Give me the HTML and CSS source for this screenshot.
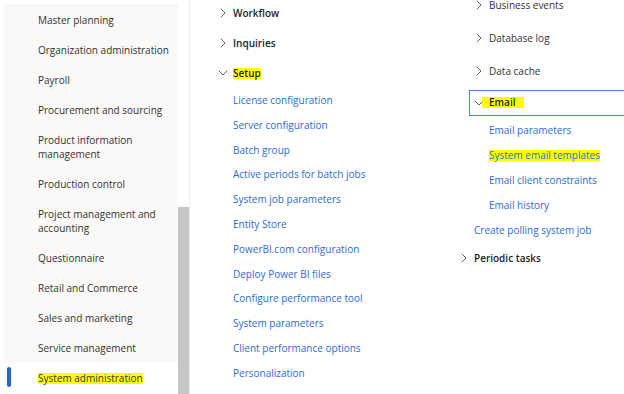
FILE: index.html
```html
<!DOCTYPE html>
<html>
    <head>
        <link rel="stylesheet" href="styles.css">
    </head>
    <body>
        <div class="page">
            <nav class="modules">
                <ul class="module-list">
                    <li class="module">Master planning</li>
                    <li class="module">Organization administration</li>
                    <li class="module">Payroll</li>
                    <li class="module">Procurement and sourcing</li>
                    <li class="module">Product information management</li>
                    <li class="module">Production control</li>
                    <li class="module">Project management and accounting</li>
                    <li class="module">Questionnaire</li>
                    <li class="module">Retail and Commerce</li>
                    <li class="module">Sales and marketing</li>
                    <li class="module">Service management</li>
                    <li class="module selected"><span class="hl">System administration</span></li>
                </ul>
            </nav>
            <div class="scrollbar"><div class="thumb"></div></div>

            <section class="col col-mid">
                <div class="group"><span class="chev"><svg width="6" height="10" viewBox="0 0 6 10"><path d="M0.8 0.8 L5 5 L0.8 9.2"/></svg></span>Workflow</div>
                <div class="group"><span class="chev"><svg width="6" height="10" viewBox="0 0 6 10"><path d="M0.8 0.8 L5 5 L0.8 9.2"/></svg></span>Inquiries</div>
                <div class="group"><span class="chev"><svg width="10" height="6" viewBox="0 0 10 6"><path d="M0.8 0.8 L5 5 L9.2 0.8"/></svg></span><span class="hl">Setup</span></div>
                <a class="link">License configuration</a>
                <a class="link">Server configuration</a>
                <a class="link">Batch group</a>
                <a class="link">Active periods for batch jobs</a>
                <a class="link">System job parameters</a>
                <a class="link">Entity Store</a>
                <a class="link">PowerBI.com configuration</a>
                <a class="link">Deploy Power BI files</a>
                <a class="link">Configure performance tool</a>
                <a class="link">System parameters</a>
                <a class="link">Client performance options</a>
                <a class="link">Personalization</a>
            </section>

            <section class="col col-right">
                <div class="sub">
                    <div class="group tall plain"><span class="chev"><svg width="6" height="10" viewBox="0 0 6 10"><path d="M0.8 0.8 L5 5 L0.8 9.2"/></svg></span>Business events</div>
                    <div class="group tall plain"><span class="chev"><svg width="6" height="10" viewBox="0 0 6 10"><path d="M0.8 0.8 L5 5 L0.8 9.2"/></svg></span>Database log</div>
                    <div class="group tall plain"><span class="chev"><svg width="6" height="10" viewBox="0 0 6 10"><path d="M0.8 0.8 L5 5 L0.8 9.2"/></svg></span>Data cache</div>
                    <div class="focus-row">
                        <div class="group focused"><span class="chev"><svg width="10" height="6" viewBox="0 0 10 6"><path d="M0.8 0.8 L5 5 L9.2 0.8"/></svg></span><span class="hl hl-wide">Email</span></div>
                    </div>
                    <div class="sublinks">
                        <a class="link">Email parameters</a>
                        <a class="link"><span class="hl">System email templates</span></a>
                        <a class="link">Email client constraints</a>
                        <a class="link">Email history</a>
                    </div>
                </div>
                <a class="link link-l1">Create polling system job</a>
                <div class="group periodic"><span class="chev"><svg width="6" height="10" viewBox="0 0 6 10"><path d="M0.8 0.8 L5 5 L0.8 9.2"/></svg></span>Periodic tasks</div>
            </section>
        </div>
    </body>
</html>
```

FILE: styles.css
```css
body{
    margin:0;
    background:#ffffff;
    font-family:"Open Sans", "Noto Sans", sans-serif;
    font-size:10px;
    color:#323130;
}

.page{
    display:flex;
    height:394px;
    overflow:hidden;
}

/* left module list */
.modules{
    width:174px;
    margin:4px 0 0 4px;
    padding-top:1px;
    background:#faf9f8;
    flex-shrink:0;
}
.module-list{
    list-style:none;
    margin:0;
    padding:0;
}
.module{
    padding:8px 8px 8px 34px;
    line-height:14px;
}
.module.selected{
    position:relative;
    background:#ffffff;
}
.module.selected::before{
    content:"";
    position:absolute;
    left:3px;
    top:4px;
    width:4px;
    height:20px;
    border-radius:2px;
    background:#2463d8;
}

.scrollbar{
    width:11px;
    border-right:1px solid #edebe9;
    flex-shrink:0;
}
.thumb{
    margin-top:207px;
    height:200px;
    background:#c8c6c4;
}

/* menu columns */
.col{
    flex-shrink:0;
}
.col-mid{
    width:241px;
    padding:0 0 0 27px;
    margin-top:-2px;
}
.col-right{
    flex:1;
    margin-top:-12px;
}

.group{
    display:flex;
    align-items:center;
    height:30px;
    font-weight:600;
    color:#201f1e;
}
.group.tall{
    height:33px;
}
.group.plain{
    font-weight:400;
    color:#323130;
}
.chev{
    width:12px;
    margin-right:4px;
    display:flex;
    justify-content:center;
    align-items:center;
}
.chev svg path{
    fill:none;
    stroke:#605e5c;
    stroke-width:1;
}

.link{
    display:block;
    height:24.8px;
    line-height:24.8px;
    padding-left:16px;
    color:#2b6bd6;
    white-space:nowrap;
}

.hl{
    display:inline-block;
    background:#ffff00;
    line-height:11px;
}
.hl-wide{
    padding:0 8px 0 7px;
    margin-left:-7px;
}

.sub{
    padding-left:15px;
}
.focus-row{
    height:31px;
    display:flex;
    align-items:center;
    margin-left:-4px;
}
.group.focused{
    flex:1;
    height:24px;
    padding-left:3px;
    border:1.5px solid #4f87e0;
    border-right:none;
}
.sublinks .link{
    height:25px;
    line-height:25px;
}
.link-l1{
    height:25px;
    line-height:25px;
}
.group.periodic{
    height:29px;
}
```
